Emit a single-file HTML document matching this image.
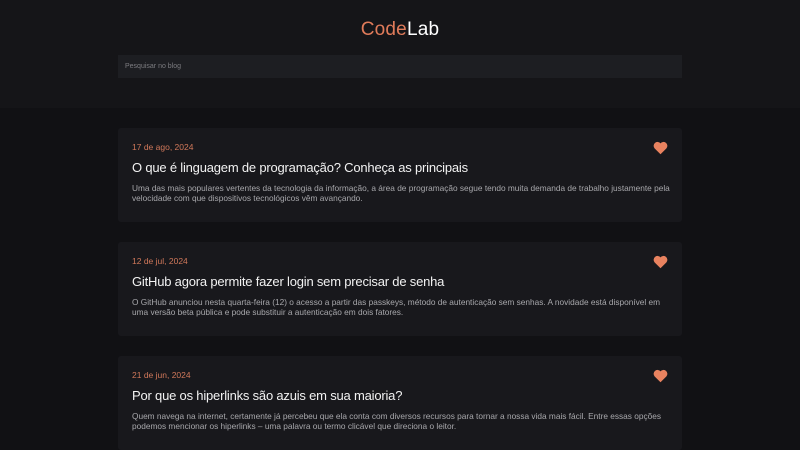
<!DOCTYPE html>
<html><head><meta charset="utf-8"><style>
*{margin:0;padding:0;box-sizing:border-box}
body{width:800px;height:450px;overflow:hidden;background:#111114;font-family:"Liberation Sans",sans-serif;position:relative}
.hdr{position:absolute;left:0;top:0;width:800px;height:108px;background:#151518}
.logo{position:absolute;top:19px;width:800px;text-align:center;font-size:19px;color:#fff;letter-spacing:0.2px}
.logo span{color:#e07b5a}
.search{position:absolute;left:118px;top:55px;width:564px;height:23px;background:#1d1e22;color:#7c7c80;font-size:7px;padding:8px 7px}
.card{position:absolute;left:118px;width:564px;height:94px;background:#18181c;border-radius:3px}
.date{position:absolute;left:14px;top:14px;font-size:8.5px;color:#d0785a}
.title{position:absolute;left:14px;top:32px;font-size:13px;letter-spacing:-0.2px;color:#f2f2f2}
.desc{position:absolute;left:14px;top:55px;width:540px;font-size:8.3px;line-height:10px;color:#a8a8ac}
.heart{position:absolute;left:535px;top:13px}
</style></head><body>
<div class="hdr"></div>
<div class="logo"><span>Code</span>Lab</div>
<div class="search">Pesquisar no blog</div>

<div class="card" style="top:128px">
<div class="date">17 de ago, 2024</div>
<svg class="heart" width="15" height="14" viewBox="0 0 24 22"><path d="M12 21 L2.5 11.5 A5.6 5.6 0 0 1 12 3.5 A5.6 5.6 0 0 1 21.5 11.5 Z" fill="#e8825f"/></svg>
<div class="title">O que é linguagem de programação? Conheça as principais</div>
<div class="desc">Uma das mais populares vertentes da tecnologia da informação, a área de programação segue tendo muita demanda de trabalho justamente pela velocidade com que dispositivos tecnológicos vêm avançando.</div>
</div>

<div class="card" style="top:242px">
<div class="date">12 de jul, 2024</div>
<svg class="heart" width="15" height="14" viewBox="0 0 24 22"><path d="M12 21 L2.5 11.5 A5.6 5.6 0 0 1 12 3.5 A5.6 5.6 0 0 1 21.5 11.5 Z" fill="#e8825f"/></svg>
<div class="title">GitHub agora permite fazer login sem precisar de senha</div>
<div class="desc">O GitHub anunciou nesta quarta-feira (12) o acesso a partir das passkeys, método de autenticação sem senhas. A novidade está disponível em uma versão beta pública e pode substituir a autenticação em dois fatores.</div>
</div>

<div class="card" style="top:356px">
<div class="date">21 de jun, 2024</div>
<svg class="heart" width="15" height="14" viewBox="0 0 24 22"><path d="M12 21 L2.5 11.5 A5.6 5.6 0 0 1 12 3.5 A5.6 5.6 0 0 1 21.5 11.5 Z" fill="#e8825f"/></svg>
<div class="title">Por que os hiperlinks são azuis em sua maioria?</div>
<div class="desc">Quem navega na internet, certamente já percebeu que ela conta com diversos recursos para tornar a nossa vida mais fácil. Entre essas opções podemos mencionar os hiperlinks – uma palavra ou termo clicável que direciona o leitor.</div>
</div>
</body></html>
